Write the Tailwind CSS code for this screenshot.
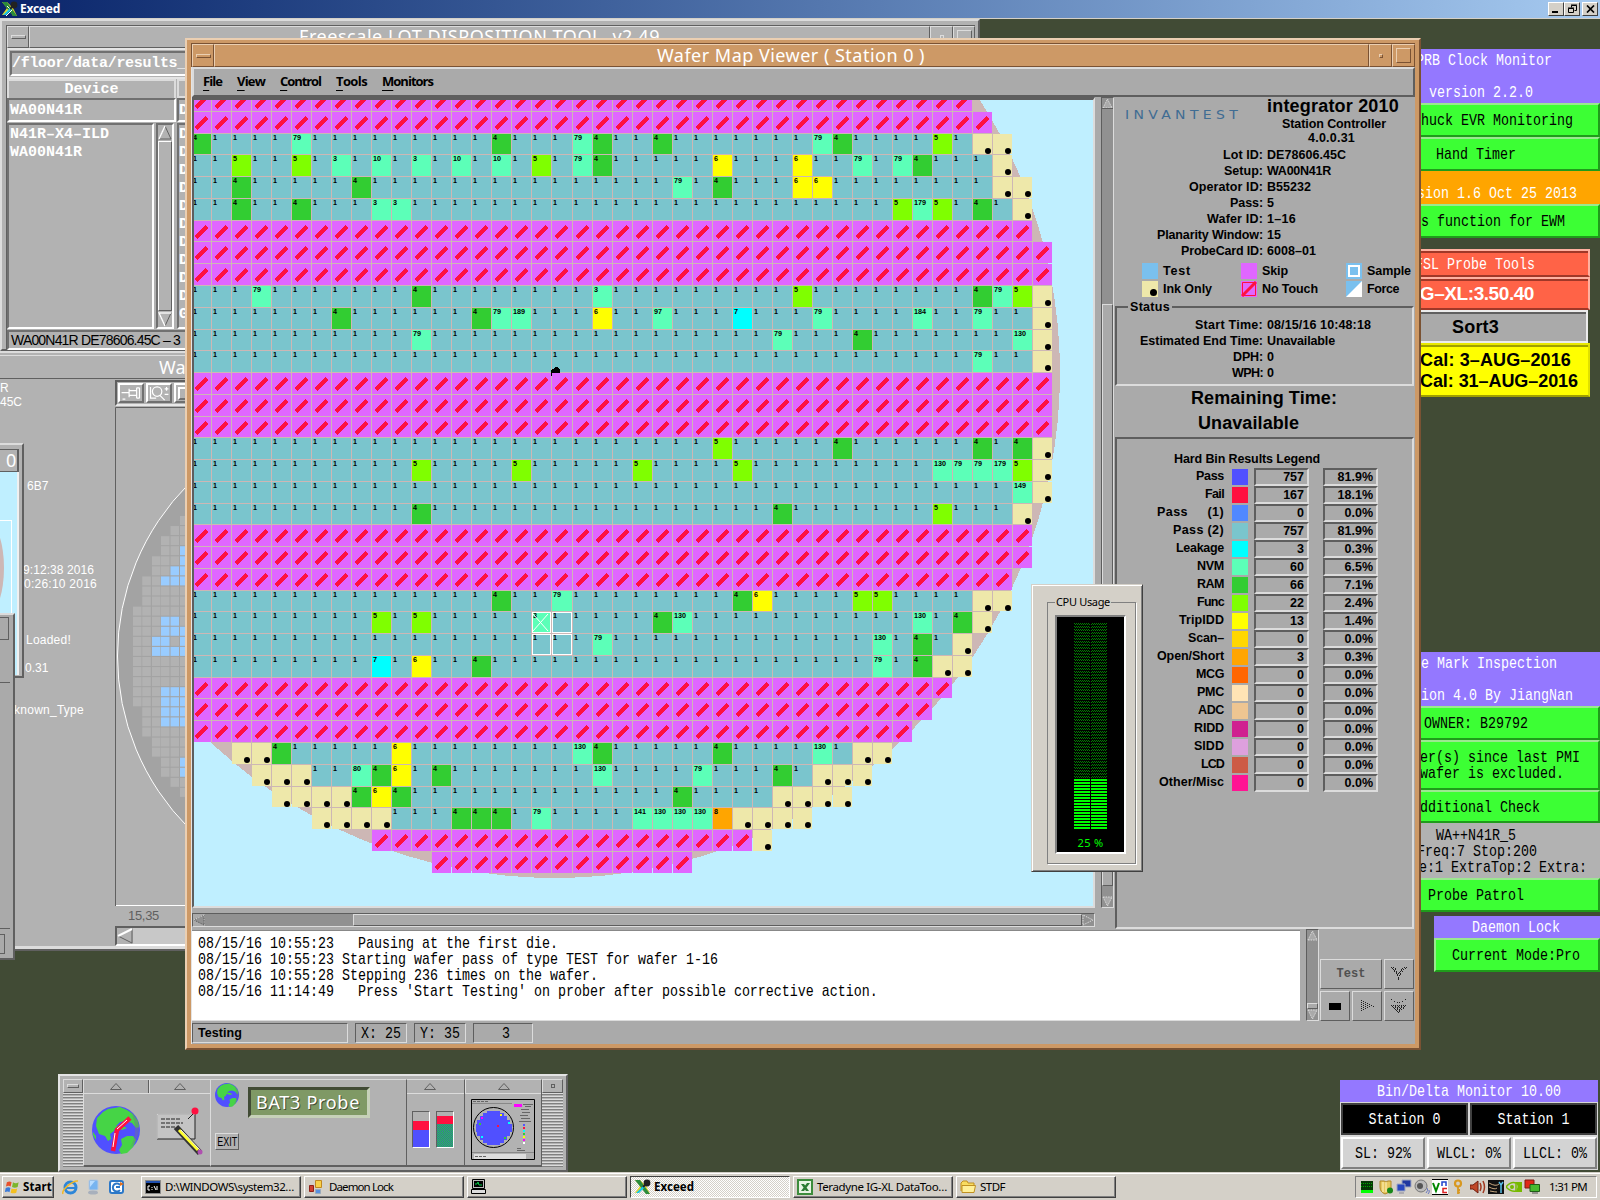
<!DOCTYPE html>
<html lang="en">
<head>
<meta charset="utf-8">
<title>Exceed</title>
<script src="https://cdn.jsdelivr.net/npm/@tailwindcss/browser@4"></script>
</head>
<body class="w-[1600px] h-[1200px] overflow-hidden bg-[#414b35] relative font-['Liberation_Sans',sans-serif] text-black">

<!-- Exceed title bar -->
<header class="h-[19px] flex items-center bg-linear-to-r from-[#0a246a] to-[#a6caf0] border-b border-[#d4d0c8] pl-[2px] pr-[2px]">
  <svg class="w-4 h-4 shrink-0" viewBox="0 0 16 16"><path d="M0 1l5 6-5 7h4l4-5 3 6h4l-4-8 3-4-5 2-4-4z" fill="#e8d820"/><path d="M0 1h5l10 14h-4z" fill="#2c8c3c"/><path d="M1 14L9 6l1 2-6 6z" fill="#19c8e8"/><path d="M4 15l6-6M5 5l3 3" stroke="#fff"/><circle cx="12" cy="4" r="3.4" fill="#222"/><path d="M8 8l3-3" stroke="#222" stroke-width="2"/></svg>
  <span data-w="40" class="ml-[2px] text-white font-bold text-[12px] leading-none font-['Noto_Sans',sans-serif]">Exceed</span>
  <div class="ml-auto flex h-[14px]">
    <div class="w-[16px] bg-[#d4d0c8] border border-t-white border-l-white border-r-[#404040] border-b-[#404040] flex items-end pl-[3px] pb-[2px]"><i class="w-[6px] h-[2px] bg-black"></i></div>
    <div class="w-[16px] bg-[#d4d0c8] border border-t-white border-l-white border-r-[#404040] border-b-[#404040] flex items-center justify-center"><svg class="w-[9px] h-[10px]" viewBox="0 0 9 10"><path d="M3.5 3.5V1.5H8.5V6.5H6.500M3 1h6M.5 4.500h5v4h-5zM0 4h6" fill="none" stroke="#000"/></svg></div>
    <div class="ml-[2px] w-[16px] bg-[#d4d0c8] border border-t-white border-l-white border-r-[#404040] border-b-[#404040] flex items-center justify-center"><svg class="w-[9px] h-[8px]" viewBox="0 0 9 8"><path d="M1 .5l7 7M8 .5l-7 7" stroke="#000" stroke-width="1.700"/></svg></div>
  </div>
</header>

<!-- PRB clock monitor -->
<aside class="absolute left-[1400px] top-[49px] w-[200px] font-['Liberation_Mono',monospace] text-[13.33px] leading-none [&_span]:inline-block [&_span]:scale-y-[1.2] [&_span]:translate-y-px [&_span]:whitespace-pre">
  <div class="h-[54px] bg-[#9478ff] text-white pt-[4px]">
    <div class="pl-4 h-8"><span>PRB Clock Monitor</span></div>
    <div class="pl-[29px]"><span>version 2.2.0</span></div>
  </div>
  <div class="h-[34px] bg-[#3cff34] border-2 border-t-[#9be890] border-r-[#1f9c1b] border-b-[#1f9c1b] border-l-[#3cff34] pl-[11px] flex items-center"><span>Chuck EVR Monitoring</span></div>
  <div class="h-[34px] bg-[#3cff34] border-2 border-t-[#9be890] border-r-[#1f9c1b] border-b-[#1f9c1b] border-l-[#3cff34] pl-[34px] flex items-center"><span>Hand Timer</span></div>
  <div class="h-[33px] bg-[#ffa500] text-white pl-[9px] flex items-end pb-[5px]"><span>rsion 1.6 Oct 25 2013</span></div>
  <div class="h-[34px] bg-[#3cff34] border-2 border-t-[#9be890] border-r-[#1f9c1b] border-b-[#1f9c1b] border-l-[#3cff34] pl-[19px] flex items-center"><span>s function for EWM</span></div>
</aside>

<!-- FSL probe tools -->
<aside class="absolute left-[1400px] top-[249px] w-[190px] leading-none">
  <div class="h-[28px] bg-[#ff6347] border-2 border-[#ffb0a0] border-b-[#a03828] pt-px shadow-[inset_0_2px_#a03828] flex items-center pl-[13px] font-['Liberation_Mono',monospace] text-[13.33px] text-white"><span class="inline-block scale-y-[1.2] translate-y-px">FSL Probe Tools</span></div>
  <div class="h-[33px] bg-[#ff6347] border-2 border-[#ffb0a0] border-b-[#a03828] shadow-[inset_0_2px_#a03828] flex items-center pl-[13px] text-[19px] font-bold text-white"><span data-w="119">IG–XL:3.50.40</span></div>
  <div class="h-[33px] w-[188px] bg-[#aaaaaa] border-2 border-[#ececec] shadow-[inset_0_2px_#606060] flex items-center pl-[50px] text-[18px] font-bold"><span data-w="47">Sort3</span></div>
  <div class="h-[54px] bg-[#ffff00] border-2 border-[#e0e000] border-t-[#e8e800] border-b-[#a0a000] shadow-[inset_0_2px_#a0a000] pl-[18px] pt-[5px] text-[18px] font-bold leading-[21px]">
    <div><span data-w="151">Cal: 3–AUG–2016</span></div><div><span data-w="158">Cal: 31–AUG–2016</span></div>
  </div>
</aside>

<!-- Probe mark inspection -->
<aside class="absolute left-[1400px] top-[652px] w-[200px] font-['Liberation_Mono',monospace] text-[13.33px] leading-none [&_span]:inline-block [&_span]:scale-y-[1.2] [&_span]:translate-y-px [&_span]:whitespace-pre">
  <div class="h-[54px] bg-[#9478ff] text-white pt-[4px]">
    <div class="pl-[21px] h-8"><span>e Mark Inspection</span></div>
    <div class="pl-[21px]"><span>ion 4.0 By JiangNan</span></div>
  </div>
  <div class="h-[34px] bg-[#3cff34] border-2 border-t-[#9be890] border-r-[#1f9c1b] border-b-[#1f9c1b] border-l-[#3cff34] pl-[22px] flex items-center"><span>OWNER: B29792</span></div>
  <div class="h-[50px] bg-[#3cff34] border-2 border-t-[#9be890] border-r-[#1f9c1b] border-b-[#1f9c1b] border-l-[#3cff34] pl-[18px] pt-[7px] leading-4"><div><span>er(s) since last PMI</span></div><div><span>wafer is excluded.</span></div></div>
  <div class="h-[33px] bg-[#3cff34] border-2 border-t-[#9be890] border-r-[#1f9c1b] border-b-[#1f9c1b] border-l-[#3cff34] pl-[18px] flex items-center"><span>dditional Check</span></div>
  <div class="h-[55px] bg-[#b2b2b2] pt-[4px] leading-4">
    <div class="pl-9"><span>WA++N41R_5</span></div><div class="pl-[17px]"><span>Freq:7 Stop:200</span></div><div class="pl-[19px]"><span>e:1 ExtraTop:2 Extra:</span></div>
  </div>
  <div class="h-[34px] bg-[#3cff34] border-2 border-t-[#9be890] border-r-[#1f9c1b] border-b-[#1f9c1b] border-l-[#3cff34] pl-[26px] flex items-center"><span>Probe Patrol</span></div>
</aside>

<!-- Daemon lock -->
<aside class="absolute left-[1434px] top-[916px] w-[166px] font-['Liberation_Mono',monospace] text-[13.33px] leading-none [&_span]:inline-block [&_span]:scale-y-[1.2] [&_span]:translate-y-px [&_span]:whitespace-pre">
  <div class="h-[22px] bg-[#9478ff] text-white pl-[38px] flex items-center"><span>Daemon Lock</span></div>
  <div class="h-[34px] bg-[#3cff34] border-2 border-t-[#9be890] border-r-[#1f9c1b] border-b-[#1f9c1b] border-l-[#9be890] pl-[16px] flex items-center"><span>Current Mode:Pro</span></div>
</aside>

<!-- Bin / delta monitor -->
<aside class="absolute left-[1340px] top-[1080px] w-[258px] bg-[#d8d8d8] font-['Liberation_Mono',monospace] text-[13.33px] leading-none [&_span]:inline-block [&_span]:scale-y-[1.2] [&_span]:translate-y-px [&_span]:whitespace-pre">
  <div class="h-[22px] bg-[#9478ff] text-white flex items-center justify-center"><span>Bin/Delta Monitor 10.00</span></div>
  <div class="flex gap-[2px] p-[1px] h-[34px] text-white">
    <div class="flex-1 bg-black border-2 border-[#404040] flex items-center justify-center"><span>Station 0</span></div>
    <div class="flex-1 bg-black border-2 border-[#404040] flex items-center justify-center"><span>Station 1</span></div>
  </div>
  <div class="flex gap-[2px] p-[1px] h-[34px]">
    <div class="flex-1 bg-[#d3d3d3] border-2 border-t-white border-l-white border-r-[#808080] border-b-[#808080] flex items-center justify-center"><span>SL: 92%</span></div>
    <div class="flex-1 bg-[#d3d3d3] border-2 border-t-white border-l-white border-r-[#808080] border-b-[#808080] flex items-center justify-center"><span>WLCL: 0%</span></div>
    <div class="flex-1 bg-[#d3d3d3] border-2 border-t-white border-l-white border-r-[#808080] border-b-[#808080] flex items-center justify-center"><span>LLCL: 0%</span></div>
  </div>
</aside>

<!-- Lot disposition tool -->
<section class="absolute left-0 top-[19px] w-[980px] h-[332px] bg-[#b2b2b2] border-2 border-t-[#dcdcdc] border-l-[#dcdcdc] border-r-[#606060] border-b-[#606060] pl-[4px] pr-[3px] pt-[4px] flex flex-col">
  <div class="h-[23px] shrink-0 border-t border-l border-[#606060] flex">
    <div class="w-[22px] border border-t-[#dcdcdc] border-l-[#dcdcdc] border-r-[#606060] border-b-[#606060] flex items-center justify-center"><i class="w-[15px] h-[4px] border border-t-[#dcdcdc] border-l-[#dcdcdc] border-r-[#606060] border-b-[#606060]"></i></div>
    <div class="flex-1 border border-t-[#dcdcdc] border-l-[#dcdcdc] border-r-[#606060] border-b-[#606060] text-white text-[18px] leading-[18px] pl-[269px] font-['Noto_Sans',sans-serif] overflow-hidden"><span data-w="361">Freescale LOT DISPOSITION TOOL  v2.49</span></div>
    <div class="w-[23px] border border-t-[#dcdcdc] border-l-[#dcdcdc] border-r-[#606060] flex items-center justify-center"><i class="w-[4px] h-[4px] border border-[#dcdcdc]"></i></div>
    <div class="w-[22px] border border-t-[#dcdcdc] border-l-[#dcdcdc] border-r-[#606060] flex items-center justify-center"><i class="w-[15px] h-[15px] border border-t-[#dcdcdc] border-l-[#dcdcdc] border-r-[#606060] border-b-[#606060]"></i></div>
  </div>
  <div class="w-[300px] border-l border-[#606060] font-['Liberation_Mono',monospace] font-bold text-[15px] leading-none text-white">
    <div class="h-[31px] border-t-2 border-l-2 border-b-2 border-[#e4e4e4] p-px"><div class="h-full border-t-2 border-l-2 border-[#707070] border-b-2 border-b-white flex items-center whitespace-nowrap"><span data-w="174">/floor/data/results_</span></div></div>
    <div class="flex">
      <div class="w-[169px]">
        <div class="h-[19px] border-2 border-b-0 border-[#dcdcdc] flex items-center justify-center">Device</div>
        <div class="h-[24px] border-2 border-t-[#707070] border-l-[#707070] border-r-white border-b-white flex items-center pl-px">WA00N41R</div>
        <div class="flex mt-[1px] h-[206px] gap-[2px]">
          <div class="w-[147px] border-2 border-t-[#707070] border-l-[#707070] border-r-white border-b-white pl-px leading-[18px] pt-px">N41R–X4–ILD<br>WA00N41R</div>
          <div class="w-[18px] border-2 border-t-[#707070] border-l-[#707070] border-r-white border-b-white flex flex-col">
            <svg class="w-[14px] h-[15px]" viewBox="0 0 14 15"><path d="M1 14L7 1l6 13z" fill="#b2b2b2" stroke="#606060"/><path d="M1 14L7 1" stroke="#fff" stroke-width="1.500"/></svg>
            <div class="flex-1 border border-t-white border-l-white border-r-[#606060] border-b-[#606060] my-px"></div>
            <svg class="w-[14px] h-[15px]" viewBox="0 0 14 15"><path d="M1 1L7 14l6-13z" fill="#b2b2b2" stroke="#606060"/><path d="M13 1H1l6 13" stroke="#fff" fill="none" stroke-width="1.500"/></svg>
          </div>
        </div>
      </div>
      <div class="flex-1 pl-px">
        <div class="h-[19px] border-2 border-[#dcdcdc]"></div>
        <div class="h-[24px] border-2 border-t-[#707070] border-l-[#707070] border-b-white flex items-center">D</div>
        <div class="mt-[1px] h-[206px] border-2 border-t-[#707070] border-l-[#707070] border-b-white leading-[18px] pt-px">D<br>D<br>D<br>D<br>D<br>D<br>D<br>D<br>D<br>D<br>G</div>
      </div>
    </div>
    <div class="h-[20px] mt-px border-2 border-t-[#707070] border-l-[#707070] border-b-white font-['Liberation_Sans',sans-serif] font-normal text-black text-[14px] flex items-center pl-[2px]"><span data-w="169">WA00N41R DE78606.45C – 3</span></div>
  </div>
</section>

<!-- Wafer overview window -->
<section class="absolute left-0 top-[351px] w-[300px] h-[600px] bg-[#b2b2b2] border-t-2 border-t-[#dcdcdc] border-b-[3px] border-b-[#606060] flex flex-col">
  <div class="h-[24px] shrink-0 mt-[2px] border-y border-t-[#dcdcdc] border-b-[#606060] pl-[159px] text-white text-[18px] leading-[22px] font-['Noto_Sans',sans-serif]">Wa</div>
  <div class="flex flex-1 border-b-[3px] border-[#dcdcdc] pt-px">
    <div class="w-[115px] shrink-0 text-[12px] leading-[14px] text-white">
      <div class="pt-px">R</div>
      <div>45C</div>
      <div class="pl-[27px] pt-[70px]">6B7</div>
      <div class="pl-[23px] pt-[70px]"><span data-w="71">9:12:38 2016</span></div>
      <div class="pl-[24px]"><span data-w="73">0:26:10 2016</span></div>
      <div class="pl-[26px] pt-[42px]"><span data-w="45">Loaded!</span></div>
      <div class="pl-[25px] pt-[14px]">0.31</div>
      <div class="pl-[14px] pt-[28px]"><span data-w="70">known_Type</span></div>
    </div>
    <div class="flex-1">
      <div class="h-[26px] border-2 border-[#e8e8e8] border-t-[#606060] border-l-[#606060] p-px flex gap-[2px]">
        <div class="w-[26px] shrink-0 border-2 border-t-white border-l-white border-r-[#707070] border-b-[#707070]"><svg viewBox="0 0 22 17" class="w-full h-full"><path d="M1 8h8M9 4v9M9 6h8M9 11h8M17 3v11M20 3v11M17 3h3M17 14h3M2 15h3" fill="none" stroke="#fff" stroke-width="1.300"/></svg></div>
        <div class="w-[26px] shrink-0 border-2 border-t-white border-l-white border-r-[#707070] border-b-[#707070]"><svg viewBox="0 0 22 17" class="w-full h-full"><circle cx="9" cy="7" r="5" fill="none" stroke="#fff" stroke-width="1.300"/><path d="M12 11l5 5M2 2v12h6M17 4h4M19 2v4M17 10h4" fill="none" stroke="#fff" stroke-width="1.300"/></svg></div>
        <div class="w-[26px] shrink-0 border-2 border-t-white border-l-white border-r-[#707070] border-b-[#707070] p-[2px]"><div class="w-[14px] h-[13px] border-2 border-r-[#707070] border-b-[#707070] border-white"></div></div>
      </div>
      <svg id="mini" class="block mt-px w-[185px] h-[499px]" viewBox="115 406 185 499">
        <path d="M115.500 905V406.500H300M115 904.500H300" stroke="#606060" fill="none"/>
        <path d="M116 904.500H300" stroke="#fff"/>
        <circle cx="361" cy="655" r="243.500" fill="#a3a3a3" stroke="#fff"/>
      </svg>
      <div class="h-[20px] pl-[13px] text-[13px] leading-[19px] text-[#606060]"><span data-w="31">15,35</span></div>
      <div class="h-[20px] border-2 border-t-[#606060] border-l-[#606060] border-white bg-[#b2b2b2] flex"><svg viewBox="0 0 16 16" class="w-4 h-4"><path d="M15 1v14L1 8z" fill="#b2b2b2" stroke="#606060"/><path d="M15 1L1 8" stroke="#fff" stroke-width="2"/></svg><div class="flex-1 bg-[#c8c8c8]"></div></div>
    </div>
  </div>
</section>

<!-- Overlapping window edges -->
<section class="absolute left-0 top-[443px] w-[24px] h-[235px] bg-[#b2b2b2] border-r-2 border-b-2 border-[#606060] border-t-2 border-t-[#dcdcdc] pt-[4px] pr-[3px]">
  <div class="h-[23px] border-t border-r-2 border-b border-[#606060] text-white text-[18px] leading-[20px] pl-[6px] font-['Noto_Sans',sans-serif]">0</div>
  <div class="h-[203px] bg-[#bfefff] border-r-2 border-[#f0f0f0] pt-[48px]">
    <div class="relative w-[12px] h-[150px] border-t border-r border-white flex items-center overflow-hidden"><i class="absolute -left-[30px] top-0 w-[34px] h-[94px] rounded-[50%] bg-[#cdb7b5]"></i></div>
  </div>
</section>
<section class="absolute left-0 top-[613px] w-[15px] h-[347px] bg-[#aaaaaa] border-r-2 border-b-2 border-[#606060] border-t-2 border-t-[#dcdcdc] pt-[2px] pr-[3px] flex flex-col">
  <div class="h-[23px] border border-l-0 border-[#606060] mr-px"></div>
  <div class="h-[43px] border-b border-[#606060]"></div>
  <div class="flex-1"></div>
  <div class="h-[30px] border-t border-[#606060] pt-[5px] pr-[5px] pb-[4px]"><div class="h-full border-y border-r border-[#606060]"></div></div>
</section>

<!-- Wafer map viewer -->
<section class="absolute left-[185px] top-[38px] w-[1236px] h-[1012px] bg-[#cd9966] border-2 border-t-[#ebcfb2] border-l-[#ebcfb2] border-r-[#7a5233] border-b-[#7a5233] pl-[4px] pr-[4px] pt-[3px] pb-[4px] flex flex-col">
  <div class="h-[24px] shrink-0 border-t border-l border-[#7a5233] flex">
    <div class="w-[22px] border border-t-[#ebcfb2] border-l-[#ebcfb2] border-r-[#7a5233] border-b-[#7a5233] flex items-center justify-center"><i class="w-[15px] h-[4px] border border-t-[#ebcfb2] border-l-[#ebcfb2] border-r-[#7a5233] border-b-[#7a5233]"></i></div>
    <div class="flex-1 border border-t-[#ebcfb2] border-l-[#ebcfb2] border-r-[#7a5233] border-b-[#7a5233] text-white text-[18px] leading-[20px] pl-[442px] font-['Noto_Sans',sans-serif]"><span data-w="268">Wafer Map Viewer ( Station 0 )</span></div>
    <div class="w-[23px] border border-t-[#ebcfb2] border-l-[#ebcfb2] border-r-[#7a5233] border-b-[#7a5233] flex items-center justify-center"><i class="w-[4px] h-[4px] border border-t-[#ebcfb2] border-l-[#ebcfb2] border-r-[#7a5233] border-b-[#7a5233]"></i></div>
    <div class="w-[23px] border border-t-[#ebcfb2] border-l-[#ebcfb2] border-r-[#7a5233] border-b-[#7a5233] flex items-center justify-center"><i class="w-[15px] h-[15px] border border-t-[#ebcfb2] border-l-[#ebcfb2] border-r-[#7a5233] border-b-[#7a5233]"></i></div>
  </div>
  <div class="flex-1 bg-[#aaaaaa] border-l border-[#e4e4e4] flex flex-col min-h-0">
    <nav class="h-[30px] shrink-0 border-2 border-t-[#dcdcdc] border-l-[#dcdcdc] border-r-[#5e5e5e] border-b-[#5e5e5e] flex items-center font-bold text-[13px] leading-none font-['Open_Sans','Noto_Sans',sans-serif] pl-[9px] pb-[2px]">
      <span class="w-[34px]"><span data-w="19"><u class="underline-offset-4">F</u>ile</span></span>
      <span class="w-[43px]"><span data-w="28"><u class="underline-offset-4">V</u>iew</span></span>
      <span class="w-[56px]"><span data-w="41"><u class="underline-offset-4">C</u>ontrol</span></span>
      <span class="w-[46px]"><span data-w="31"><u class="underline-offset-4">T</u>ools</span></span>
      <span data-w="51"><u class="underline-offset-4">M</u>onitors</span>
    </nav>
    <div class="flex h-[831px] shrink-0">
      <div class="w-[903px] shrink-0">
        <div class="h-[811px] border-t-[3px] border-l-2 border-b-2 border-r-2 border-t-[#5e5e5e] border-l-[#5e5e5e] border-r-[#dcdcdc] border-b-[#dcdcdc] overflow-hidden">
          <svg id="map" class="block w-[899px] h-[806px]" viewBox="194 100 899 806" shape-rendering="crispEdges"></svg>
        </div>
        <div class="mt-[5px] h-[14px] bg-[#919191] border border-t-[#5e5e5e] border-l-[#5e5e5e] border-r-[#dcdcdc] border-b-[#dcdcdc] flex">
          <svg viewBox="0 0 12 12" class="w-3 h-3 bg-[#aaa]"><path d="M11 1v10L1 6z" fill="#919191" stroke="#5e5e5e" stroke-dasharray="1.500 1"/><path d="M11 1L1 6" stroke="#dcdcdc" stroke-dasharray="1.500 1"/></svg>
          <div class="w-[148px]"></div>
          <div class="flex-1 bg-[#aaa] border border-t-[#dcdcdc] border-l-[#dcdcdc] border-r-[#5e5e5e] border-b-[#5e5e5e]"></div>
          <svg viewBox="0 0 12 12" class="w-3 h-3 bg-[#919191]"><path d="M1 1v10l10-5z" fill="#919191" stroke="#dcdcdc" stroke-dasharray="1.500 1"/></svg>
        </div>
      </div>
      <div class="ml-[6px] w-[13px] shrink-0 h-[811px] bg-[#919191] border border-t-[#5e5e5e] border-l-[#5e5e5e] border-r-[#dcdcdc] border-b-[#dcdcdc] flex flex-col">
        <svg viewBox="0 0 11 11" class="w-[11px] h-[11px]"><path d="M1 10L5.500 1 10 10z" fill="#aaa" stroke="#dcdcdc" stroke-dasharray="1.500 1"/><path d="M0 10.500h11" stroke="#5e5e5e"/></svg>
        <div class="h-[195px]"></div>
        <div class="flex-1 bg-[#aaa] border border-t-[#dcdcdc] border-l-[#dcdcdc] border-r-[#5e5e5e] border-b-[#5e5e5e]"></div>
        <div class="h-[10px]"></div>
        <svg viewBox="0 0 11 11" class="w-[11px] h-[11px]"><path d="M1 1l4.500 9L10 1z" fill="#aaa" stroke="#dcdcdc" stroke-dasharray="1.500 1"/></svg>
      </div>
      <!-- Station controller panel -->
      <div class="flex-1 min-w-0 pl-px pr-[1px] font-bold text-[12.500px] leading-4">
        <div class="flex h-[50px]">
          <div class="w-[140px] shrink-0 pl-[10px] pt-[9px]"><span data-w="117" class="text-[14px] font-normal text-[#3f6c93] scale-y-90 font-['DejaVu_Sans',sans-serif]">INVANTEST</span></div>
          <div class="pl-[12px] pt-[1px]">
            <div class="text-[18px] leading-[17px]"><span data-w="132">integrator 2010</span></div>
            <div class="pl-[15px] leading-[15px] pt-[2px]"><span data-w="104">Station Controller</span></div>
            <div class="pl-[41px] leading-[13px]"><span data-w="47">4.0.0.31</span></div>
          </div>
        </div>
        <div id="lot"></div>
        <div class="grid grid-cols-[99px_105px_1fr] pl-[27px] gap-y-[2px] mt-[4px] leading-4">
          <div class="flex gap-[5px]"><i class="w-4 h-4 bg-[#7ac0ee]"></i><span data-w="28">Test</span></div>
          <div class="flex gap-[5px]"><i class="w-4 h-4 bg-[#e066ff]"></i><span data-w="26">Skip</span></div>
          <div class="flex gap-[5px]"><i class="w-4 h-4 bg-[#7ac0ee] p-[2px]"><i class="block w-3 h-3 border-2 border-white"></i></i><span data-w="44">Sample</span></div>
          <div class="flex gap-[5px]"><i class="w-4 h-4 bg-[#eee8aa] pl-2 pt-2"><i class="block w-[7px] h-[7px] rounded-full bg-black"></i></i><span data-w="49">Ink Only</span></div>
          <div class="flex gap-[5px]"><svg class="w-4 h-4" viewBox="0 0 16 16"><path fill="#e066ff" d="M0 0h16v16H0z"/><path d="M1.500 1.500h13v13h-13z" fill="none" stroke="#ff1040"/><path d="M1 15L15 1" stroke="#ff1040" stroke-width="3"/></svg><span data-w="56">No Touch</span></div>
          <div class="flex gap-[5px]"><svg class="w-4 h-4" viewBox="0 0 16 16"><path fill="#7ac0ee" d="M0 0h16v16H0z"/><path fill="#fff" d="M16 0v16H0z"/></svg><span data-w="32">Force</span></div>
        </div>
        <fieldset class="mt-[2px] h-[87px] border-2 border-[#5e5e5e] border-r-[#dcdcdc] border-b-[#dcdcdc] pl-0"><legend class="ml-[11px] px-[2px] leading-4"><span data-w="40">Status</span></legend><div id="status" class="pt-[2px] -ml-[2px]"></div></fieldset>
        <div class="text-[18px] leading-[25px] h-[51px]">
          <div class="pl-[76px]"><span data-w="146">Remaining Time:</span></div>
          <div class="pl-[83px]"><span data-w="101">Unavailable</span></div>
        </div>
        <div class="h-[492px] border-2 border-t-[#5e5e5e] border-l-[#5e5e5e] border-r-[#dcdcdc] border-b-[#dcdcdc] pt-[12px]">
          <div class="pl-[57px] leading-[17px]"><span data-w="146">Hard Bin Results Legend</span></div>
          <div id="bins"></div>
        </div>
      </div>
    </div>
    <div class="flex h-[93px] shrink-0 pt-[1px]">
      <pre class="mt-px w-[1108px] shrink-0 h-[91px] bg-white border-b border-[#dcdcdc] border-t border-t-[#888] pl-[6px] pt-[5px] font-['Liberation_Mono',monospace] text-[13.33px] leading-4 [&_span]:block [&_span]:h-4 [&_span]:scale-y-[1.2]"><span>08/15/16 10:55:23   Pausing at the first die.</span><span>08/15/16 10:55:23 Starting wafer pass of type TEST for wafer 1-16</span><span>08/15/16 10:55:28 Stepping 236 times on the wafer.</span><span>08/15/16 11:14:49   Press 'Start Testing' on prober after possible corrective action.</span></pre>
      <div class="ml-[6px] w-[13px] bg-[#919191] border border-t-[#5e5e5e] border-l-[#5e5e5e] border-r-[#dcdcdc] border-b-[#dcdcdc] flex flex-col">
        <svg viewBox="0 0 11 11" class="w-[11px] h-[11px]"><path d="M1 10L5.500 1 10 10z" fill="#aaa" stroke="#dcdcdc" stroke-dasharray="1.500 1"/></svg>
        <div class="flex-1"></div>
        <div class="h-[6px] bg-[#aaa] border border-t-[#dcdcdc] border-l-[#dcdcdc] border-r-[#5e5e5e] border-b-[#5e5e5e]"></div>
        <svg viewBox="0 0 11 11" class="w-[11px] h-[11px]"><path d="M1 1l4.500 9L10 1z" fill="#aaa" stroke="#dcdcdc" stroke-dasharray="1.500 1"/></svg>
      </div>
      <div class="grid grid-cols-[30px_30px_30px] grid-rows-[30px_30px] gap-[2px] content-end pl-px text-[#505050]">
        <div class="col-span-2 border border-t-[#dcdcdc] border-l-[#dcdcdc] border-r-[#5e5e5e] border-b-[#5e5e5e] flex items-center justify-center font-['Liberation_Mono',monospace] font-bold text-[12px]">Test</div>
        <div class="border border-t-[#dcdcdc] border-l-[#dcdcdc] border-r-[#5e5e5e] border-b-[#5e5e5e] flex items-center justify-center"><svg class="w-4 h-4" viewBox="0 0 16 16" shape-rendering="crispEdges"><path d="M0 1.500h3M13 1.500h3M2 3.500h4M10 3.500h4M3 5.500h4M9 5.500h4M5 7.500h6M6 9.500h4M7 11.500h2M7 13.500h2" stroke="#222" stroke-dasharray="1 1"/><path d="M1 2.500h4M11 2.500h4M3 4.500h3M10 4.500h3M5 6.500h6M6 8.500h4M7 12.500h2" stroke="#222" stroke-dasharray="1 2"/></svg></div>
        <div class="border border-t-[#dcdcdc] border-l-[#dcdcdc] border-r-[#5e5e5e] border-b-[#5e5e5e] flex items-center justify-center"><i class="w-3 h-[7px] bg-black"></i></div>
        <div class="border border-t-[#dcdcdc] border-l-[#dcdcdc] border-r-[#5e5e5e] border-b-[#5e5e5e] flex items-center justify-center"><svg class="w-[14px] h-[14px]" viewBox="0 0 14 14"><path d="M1.500 1v12M3.500 2v10M5.500 3v8M7.500 4v6M9.500 5v4M11.500 6v2M13.500 7v1" stroke="#222" stroke-dasharray="1 1"/></svg></div>
        <div class="border border-t-[#dcdcdc] border-l-[#dcdcdc] border-r-[#5e5e5e] border-b-[#5e5e5e] flex items-center justify-center"><svg class="w-4 h-4" viewBox="0 0 16 16" shape-rendering="crispEdges"><path d="M0 1.500h2M14 1.500h2M3 3.500h2M11 3.500h2M6 4.500h4M0 7.500h16M2 9.500h12M4 11.500h8M6 13.500h4" stroke="#222" stroke-dasharray="1 1"/><path d="M1 8.500h14M3 10.500h10M5 12.500h6M7 14.500h2" stroke="#222" stroke-dasharray="1 2"/></svg></div>
      </div>
    </div>
    <footer class="flex items-start pt-[2px] gap-[7px] font-['Liberation_Mono',monospace] text-[13.33px] leading-none [&_span]:inline-block">
      <div class="w-[156px] h-[20px] border border-t-[#5e5e5e] border-l-[#5e5e5e] border-r-[#dcdcdc] border-b-[#dcdcdc] flex items-center pl-[5px] font-bold text-[12.500px] font-['Liberation_Sans',sans-serif]"><span data-w="44">Testing</span></div>
      <div class="w-[52px] h-[20px] border border-t-[#5e5e5e] border-l-[#5e5e5e] border-r-[#dcdcdc] border-b-[#dcdcdc] flex items-center pl-[5px] whitespace-pre"><span class="scale-y-[1.2] translate-y-px">X: 25</span></div>
      <div class="w-[52px] h-[20px] border border-t-[#5e5e5e] border-l-[#5e5e5e] border-r-[#dcdcdc] border-b-[#dcdcdc] flex items-center pl-[5px] whitespace-pre"><span class="scale-y-[1.2] translate-y-px">Y: 35</span></div>
      <div class="w-[60px] h-[20px] border border-t-[#5e5e5e] border-l-[#5e5e5e] border-r-[#dcdcdc] border-b-[#dcdcdc] flex items-center pl-[28px]"><span class="scale-y-[1.2] translate-y-px">3</span></div>
    </footer>
  </div>
</section>

<!-- CPU usage gadget -->
<section class="absolute left-[1031px] top-[584px] w-[112px] h-[288px] bg-[#d4d0c8] border border-t-[#d4d0c8] border-l-[#d4d0c8] border-r-[#404040] border-b-[#404040] shadow-[inset_1px_1px_#fff,inset_-1px_-1px_#808080] pl-[15px] pt-[10px] font-['Noto_Sans',sans-serif] text-[11px]">
  <fieldset class="w-[89px] h-[269px] border border-[#808080] shadow-[1px_1px_#fff] px-[7px]">
    <legend class="px-[1px] leading-[14px]"><span data-w="54">CPU Usage</span></legend>
    <div class="mt-[6px] w-[71px] h-[239px] bg-black border-2 border-t-[#808080] border-l-[#808080] border-white flex flex-col items-center pt-[6px]">
      <svg class="w-[33px] h-[207px] shrink-0" viewBox="0 0 33 207" shape-rendering="crispEdges">
        <defs>
          <pattern id="off" width="2" height="3" patternUnits="userSpaceOnUse"><path d="M0 0h1v1H0zM1 1h1v1H1z" fill="#008000"/></pattern>
          <pattern id="on" width="2" height="3" patternUnits="userSpaceOnUse"><path d="M0 0h2v2H0z" fill="#00ff00"/></pattern>
        </defs>
        <path d="M0 0h16v156H0zM17 0h16v156H17z" fill="url(#off)"/><path d="M0 156h16v51H0zM17 156h16v51H17z" fill="url(#on)"/>
      </svg>
      <div class="text-[#00ff00] leading-[14px] pt-[6px]"><span data-w="26">25 %</span></div>
    </div>
  </fieldset>
</section>

<!-- CDE front panel -->
<section class="absolute left-[58px] top-[1074px] w-[510px] h-[98px] bg-[#b2b2b2] border-2 border-t-[#e4e4e4] border-l-[#e4e4e4] border-r-[#606060] border-b-[#606060] p-[3px] flex">
  <div class="w-[20px] flex flex-col"><div class="h-[14px] border border-t-[#dcdcdc] border-l-[#dcdcdc] border-r-[#606060] border-b-[#606060] flex items-center justify-center"><i class="w-3 h-[4px] border border-t-[#dcdcdc] border-l-[#dcdcdc] border-r-[#606060] border-b-[#606060]"></i></div><div class="flex-1 bg-[repeating-linear-gradient(#dcdcdc_0_1px,#808080_1px_2px,#b2b2b2_2px_3px)]"></div></div>
  <div class="w-[127px] border-l border-t border-[#dcdcdc] border-b-2 border-b-[#606060]">
    <div class="flex h-[14px] border-b border-[#dcdcdc]">
      <div class="w-[65px] border-r border-[#606060] flex justify-center items-center"><svg class="w-3 h-[7px]" viewBox="0 0 12 7"><path d="M.5 6.500L6 .5l5.500 6z" fill="#b2b2b2" stroke="#606060"/></svg></div>
      <div class="flex-1 border-l border-[#dcdcdc] flex justify-center items-center"><svg class="w-3 h-[7px]" viewBox="0 0 12 7"><path d="M.5 6.500L6 .5l5.500 6z" fill="#b2b2b2" stroke="#606060"/></svg></div>
    </div>
    <div class="flex h-[70px]">
      <svg class="w-[64px] h-[70px]" viewBox="0 0 64 70"><circle cx="32" cy="36" r="24" fill="#5050ff"/><path d="M13 24l6-6 5-3 12-2 7 3 6 4 5 7 1 6-3 1-4-5-6-2-6 1-4 4-2 5-4 3 1 5-3 2-3-5-6-2-3-8zM37 45l6-3 6 0 3 4-3 7-6 6-6 1-2-4 3-5zM30 33l6-2 7 3-5 2zM9 38l3 4 0 4-3-5z" fill="#46d446"/><path d="M47 18q9 8 8 18t-9 18q5-8 5-18t-4-18z" fill="#707090" opacity=".45"/><path d="M29 57l4-21 13-12" fill="none" stroke="#ff1040" stroke-width="4.500"/><path d="M29 53l2-14 M33 35l10-9" fill="none" stroke="#fff" stroke-width="1"/></svg>
      <svg class="w-[62px] h-[70px]" viewBox="0 0 62 70"><path d="M9 20h38v25H9z" fill="#c4c4c4" stroke="#222"/><path d="M9 45V20h38" fill="none" stroke="#fff"/><path d="M13 25h20M13 29h22M13 33h14" stroke="#222" stroke-dasharray="4 1"/><path d="M40 25l7-7" stroke="#222"/><circle cx="47" cy="17" r="3.500" fill="#ff1040"/><path d="M28 33l24 26" stroke="#333" stroke-width="6"/><path d="M31 36l19 20" stroke="#ffff30" stroke-width="3"/><path d="M33 36l19 20" stroke="#eee"/><circle cx="52" cy="58" r="2.500" fill="#b050b0"/></svg>
    </div>
  </div>
  <div class="w-[196px] border-l border-t border-[#dcdcdc] border-b-2 border-b-[#606060] flex pt-[3px] pl-[4px]">
    <div class="w-[24px]">
      <svg class="w-6 h-6" viewBox="8 12 48 48"><circle cx="32" cy="36" r="24" fill="#5050ff"/><path d="M13 24l6-6 5-3 12-2 7 3 6 4 5 7 1 6-3 1-4-5-6-2-6 1-4 4-2 5-4 3 1 5-3 2-3-5-6-2-3-8zM37 45l6-3 6 0 3 4-3 7-6 6-6 1-2-4 3-5zM30 33l6-2 7 3-5 2z" fill="#46d446"/><path d="M47 18q9 8 8 18t-9 18q5-8 5-18t-4-18z" fill="#707090" opacity=".45"/></svg>
      <div class="mt-[26px] w-6 h-[17px] border border-[#606060] border-t-[#dcdcdc] border-l-[#dcdcdc] flex items-center justify-center text-[12px] leading-none"><span class="inline-block scale-x-75">EXIT</span></div>
    </div>
    <div class="ml-[9px] mt-[4px] w-[122px] h-[31px] bg-[#7f9965] border-[3px] border-t-[#414b35] border-l-[#414b35] border-r-[#c6d1b9] border-b-[#c6d1b9] text-white text-[18px] leading-[24px] pl-[5px] font-['Noto_Sans',sans-serif] [text-shadow:1px_1px_#414b35]"><span data-w="104">BAT3 Probe</span></div>
  </div>
  <div class="w-[58px] border-l border-t border-l-[#606060] border-t-[#dcdcdc] border-b-2 border-b-[#606060]">
    <div class="h-[14px] border-b border-[#dcdcdc] flex pl-[17px] items-center"><svg class="w-3 h-[7px]" viewBox="0 0 12 7"><path d="M.5 6.500L6 .5l5.500 6z" fill="#b2b2b2" stroke="#606060"/></svg></div>
    <div class="flex gap-[6px] pl-[5px] pt-[17px]">
      <div class="w-[18px] h-[37px] border border-t-[#606060] border-l-[#606060] border-white pt-[9px]"><div class="h-[9px] bg-[#ff1040]"></div><div class="h-[17px] bg-[#5050ff]"></div></div>
      <div class="w-[18px] h-[37px] border border-t-[#606060] border-l-[#606060] border-white pt-[4px]"><div class="h-[8px] bg-[#ff1040]"></div><div class="h-[23px] bg-[repeating-conic-gradient(#20c050_0_25%,#4070a0_0_50%)] bg-size-[2px_2px]"></div></div>
    </div>
  </div>
  <div class="w-[78px] border-x border-t border-l-[#606060] border-r-[#606060] border-t-[#dcdcdc] border-b-2 border-b-[#606060]">
    <div class="h-[14px] border-b border-l border-[#dcdcdc] flex justify-center items-center"><svg class="w-3 h-[7px]" viewBox="0 0 12 7"><path d="M.5 6.500L6 .5l5.500 6z" fill="#b2b2b2" stroke="#606060"/></svg></div>
    <svg class="ml-[6px] mt-[5px] w-[65px] h-[62px]" viewBox="0 0 65 62"><path d="M.5.5h63v60H.5z" fill="#b2b2b2" stroke="#000"/><path d="M2 2.500h15" stroke="#666" stroke-dasharray="3 1"/><path d="M1 4.500h40M1 53.500h62" stroke="#888"/><circle cx="22.500" cy="28.500" r="20" fill="#b2b2b2" stroke="#000"/><path d="M16 12h13v2h4v3h3v4h3v4h2v8h-2v4h-3v4h-3v3h-4v2H16v-2h-4v-3H9v-4H6v-4H5v-8h1v-4h3v-4h3v-3h4z" fill="#5050ff"/><path d="M10 18h2v2h-2z" fill="#f0f"/><path d="M29 15h2v2h-2z" fill="#ff0"/><path d="M37 23h2v2h-2zM10 37h2v2h-2z" fill="#0ff"/><path d="M26 26h2v2h-2z" fill="#ff1040"/><path d="M8 24h2v2H8zM33 38h2v2h-2z" fill="#3c3"/><path d="M43 5h8v3h-8z" fill="#f0f"/><path d="M52 5.500h10M54 7.500h6M50 10.500h8M51 13.500h8M49 16.500h8M50 19.500h9M48 22.500h12M46 49.500h4M46 51.500h8" stroke="#666"/><path d="M52 25h2v2h-2z" fill="#55f"/><path d="M52 28h2v2h-2z" fill="#f14"/><path d="M52 31h2v2h-2z" fill="#0ff"/><path d="M52 34h2v2h-2z" fill="#3c3"/><path d="M52 37h2v2h-2z" fill="#ff0"/><path d="M52 40h2v2h-2z" fill="#f0f"/><path d="M52 43h2v2h-2z" fill="#fff"/><path d="M3 55h52v5H3z" fill="#ddd"/><path d="M4 57.500h11" stroke="#666" stroke-dasharray="3 1"/></svg>
  </div>
  <div class="w-[21px] flex flex-col"><div class="h-[14px] border border-t-[#dcdcdc] border-l-[#dcdcdc] border-r-[#606060] border-b-[#606060] flex items-center justify-center"><i class="w-[4px] h-[4px] border border-[#606060]"></i></div><div class="flex-1 bg-[repeating-linear-gradient(#dcdcdc_0_1px,#808080_1px_2px,#b2b2b2_2px_3px)]"></div></div>
</section>

<!-- Windows taskbar -->
<footer class="absolute left-0 bottom-0 w-full h-[28px] bg-[#d4d0c8] border-t border-[#d4d0c8] shadow-[inset_0_1px_#fff] flex items-center pt-px pl-[2px] pr-[3px] font-['Noto_Sans',sans-serif] text-[11.500px] leading-none [&_span]:whitespace-pre">
  <div class="w-[52px] h-[22px] border border-t-white border-l-white border-r-[#404040] border-b-[#404040] shadow-[inset_-1px_-1px_#808080] flex items-center gap-[3px] pl-[2px] font-bold">
    <svg class="w-[15px] h-[14px]" viewBox="0 0 16 14"><path d="M2 2q3-2 5 0L6 6.500Q4 5 1 6.500z" fill="#e8502a"/><path d="M8.500 2q3 2 6 0L13.500 7q-3 1.500-6 0z" fill="#7cb52c"/><path d="M.8 8q3-1.500 5 0l-1 4.500Q3 11-.2 12.500z" fill="#3a7ad8"/><path d="M7 8.500q3 1.500 6 0L12 13q-3 1.500-6 0z" fill="#f4c020"/></svg><span data-w="29">Start</span>
  </div>
  <div class="flex gap-[6px] ml-[8px]">
    <svg class="w-[17px] h-4" viewBox="0 0 17 16"><circle cx="8.500" cy="8.500" r="5.500" fill="none" stroke="#2e86d8" stroke-width="3"/><path d="M4 9h10" stroke="#2e86d8" stroke-width="2"/><path d="M1 15C-1 11 11 1 16 2" fill="none" stroke="#f0b828" stroke-width="1.500"/></svg>
    <svg class="w-[16px] h-4" viewBox="0 0 16 16"><rect x="4" y="1" width="9" height="10" rx="1" fill="#78b4f0" stroke="#b8c8dc"/><path d="M5 2l5 0-5 6z" fill="#b8dcff"/><ellipse cx="8" cy="13.500" rx="5" ry="2" fill="#a8b0bc"/></svg>
    <svg class="w-[16px] h-4 ml-[2px]" viewBox="0 0 16 16"><rect x="1" y="2" width="13" height="12" rx="2" fill="#fff" stroke="#2c78c8" stroke-width="2"/><path d="M11 6a4 4 0 1 0 0 5M7 8h4" fill="none" stroke="#2c78c8" stroke-width="2"/><path d="M11 3l4 2-4 2z" fill="#e07020"/></svg>
  </div>
  <div class="flex gap-[3px] ml-[16px]">
    <div class="w-[160px] h-[22px] border border-t-white border-l-white border-r-[#404040] border-b-[#404040] shadow-[inset_-1px_-1px_#808080] flex items-center gap-1 pl-[3px]"><svg class="w-4 h-[14px]" viewBox="0 0 16 14"><path d="M.5.5h15v13H.5z" fill="#000" stroke="#8a8a8a"/><path d="M1 1h14v2H1z" fill="#2050b0"/><path d="M5 6H3v4h2M7 7v1M7 9v1M9 6l2 4M12 6v4" stroke="#fff" fill="none"/></svg><span data-w="129">D:\WINDOWS\system32…</span></div>
    <div class="w-[160px] h-[22px] border border-t-white border-l-white border-r-[#404040] border-b-[#404040] shadow-[inset_-1px_-1px_#808080] flex items-center gap-[6px] pl-1"><svg class="w-[14px] h-[14px]" viewBox="0 0 14 14"><path d="M.5 5.500h4v6h-4z" fill="#d04030" stroke="#902018"/><path d="M6.500.5h6v7h-6z" fill="#f8d048" stroke="#c08820"/><path d="M6.500 9.500h5v4h-5z" fill="#5890e0" stroke="#9ab"/></svg><span data-w="64">Daemon Lock</span></div>
    <div class="w-[160px] h-[22px] border border-t-white border-l-white border-r-[#404040] border-b-[#404040] shadow-[inset_-1px_-1px_#808080] flex items-center pl-[3px]"><svg class="w-4 h-4" viewBox="0 0 16 16"><path d="M1.500.5h12v9h-12z" fill="#bbb" stroke="#000"/><path d="M3 2h9v6H3z" fill="#000"/><path d="M4 5h2l1-2 1 3h3" fill="none" stroke="#0c4"/><path d="M.5 10.500h14v4H.5z" fill="#ddd" stroke="#000"/></svg></div>
    <div class="w-[160px] h-[22px] border border-t-[#404040] border-l-[#404040] border-r-white border-b-white bg-[repeating-conic-gradient(#fff_0_25%,#d4d0c8_0_50%)] bg-size-[2px_2px] flex items-center gap-[3px] pl-[4px] font-bold"><svg class="w-4 h-4" viewBox="0 0 16 16"><path d="M0 1l5 6-5 7h4l4-5 3 6h4l-4-8 3-4-5 2-4-4z" fill="#e8d820"/><path d="M0 1h5l10 14h-4z" fill="#2c8c3c"/><path d="M1 14L9 6l1 2-6 6z" fill="#19c8e8"/><circle cx="12" cy="4" r="3.400" fill="#222"/><path d="M8 8l3-3" stroke="#222" stroke-width="2"/></svg><span data-w="40">Exceed</span></div>
    <div class="w-[160px] h-[22px] border border-t-white border-l-white border-r-[#404040] border-b-[#404040] shadow-[inset_-1px_-1px_#808080] flex items-center gap-1 pl-[3px]"><svg class="w-4 h-4" viewBox="0 0 16 16"><path d="M1 1h14v14H1z" fill="#e8f4e4" stroke="#3c8c3c" stroke-width="2"/><path d="M4 5h3l5 7H9zM10 4h3l-6 8H4z" fill="#2c7c34"/></svg><span data-w="130">Teradyne IG-XL DataToo…</span></div>
    <div class="w-[160px] h-[22px] border border-t-white border-l-white border-r-[#404040] border-b-[#404040] shadow-[inset_-1px_-1px_#808080] flex items-center gap-1 pl-[3px]"><svg class="w-4 h-[14px]" viewBox="0 0 16 14"><path d="M1 11V3l2-2h4l1 2h6v3" fill="#f8dc60" stroke="#c09020"/><path d="M2 5.500h13.500L14 12.500H2z" fill="#fff098" stroke="#c09020"/></svg><span data-w="25">STDF</span></div>
  </div>
  <div class="ml-auto w-[242px] h-[22px] border border-t-[#808080] border-l-[#808080] border-white flex items-center pl-1">
    <div class="flex gap-[2px]">
      <svg class="w-[14px] h-4" viewBox="0 0 14 16"><path d="M1 2h12v12H1z" fill="#063806"/><path d="M1 11h12v3H1z" fill="#0f0"/><path d="M1 4.500h12M1 7.500h12" stroke="#0a0" stroke-dasharray="1 1"/></svg>
      <svg class="w-4 h-4 ml-[2px]" viewBox="0 0 16 16"><path d="M2 2h4l2 1 2-1h3v8q-1 4-6 5-5-2-5-7z" fill="#e8c860" stroke="#b08828"/><path d="M5 3v10M8 3v10" stroke="#fff4c0"/><circle cx="12" cy="11.500" r="3" fill="#188818"/></svg>
      <svg class="w-4 h-4" viewBox="0 0 16 16"><path d="M6 1h9v7H6z" fill="#2038a0" stroke="#a0a8c0"/><path d="M1 5h8v7H1z" fill="#2848c0" stroke="#a0a8c0"/><path d="M3 14h5" stroke="#889"/></svg>
      <svg class="w-4 h-4" viewBox="0 0 16 16"><circle cx="7" cy="7" r="6" fill="#bbb" stroke="#777"/><circle cx="6" cy="7" r="3" fill="#555"/><path d="M13 9q2 2-1 5M15 11q1 2-1 4" fill="none" stroke="#6878c0"/></svg>
      <svg class="w-4 h-4" viewBox="0 0 16 16"><path d="M0 0h16v16H0z" fill="#fff"/><path d="M0 .5h16M0 15.500h16" stroke="#000"/><path d="M1 4l3 8 3-8" fill="none" stroke="#080" stroke-width="2"/><path d="M10 7V3h4v4" fill="none" stroke="#24c" stroke-width="1.500"/><path d="M15 9.500h-4v4h4" fill="none" stroke="#d22" stroke-width="1.500"/></svg>
      <svg class="w-4 h-4" viewBox="0 0 16 16"><circle cx="8" cy="4.500" r="3" fill="none" stroke="#d89820" stroke-width="2.200"/><path d="M8 8v7M8 11h2M8 13.500h2" stroke="#d89820" stroke-width="1.800"/></svg>
      <svg class="w-4 h-4 ml-[2px]" viewBox="0 0 16 16"><path d="M0 6h3l5-4v12L3 10H0z" fill="#c04828" stroke="#702010"/><path d="M10 4q2 4 0 8M13 2q3 6 0 12" fill="none" stroke="#a03820" stroke-width="1.500"/></svg>
      <svg class="w-4 h-4" viewBox="0 0 16 16"><path d="M0 1h16v14H0z" fill="#111"/><path d="M1 4q7 4 10 1M1 8q6 3 8 1M2 12q5 1 7 1" fill="none" stroke="#c8a880"/><path d="M11 3l2 3 2-3M13 6v8" stroke="#58c0e8" fill="none" stroke-width="1.500"/></svg>
      <svg class="w-4 h-4" viewBox="0 0 16 16"><path d="M0 8q5-6 10-4v8Q5 13 0 8z" fill="none" stroke="#76b900" stroke-width="1.500"/><circle cx="6" cy="8" r="2" fill="#76b900"/><path d="M9 3h7v10H9q5-5 0-10z" fill="#76b900"/></svg>
      <svg class="w-4 h-4" viewBox="0 0 16 16"><path d="M1 1h9v8H1z" fill="#e02818" stroke="#801810"/><path d="M6 5.500h9.500v7H6z" fill="#48b830" stroke="#205c18"/><path d="M8 14h6" stroke="#555"/></svg>
    </div>
    <span data-w="38" class="ml-[9px]">1:31 PM</span>
  </div>
</footer>

<script>
const NS = 'http://www.w3.org/2000/svg';
const add = (parent, tag, attrs, text) => {
  const e = document.createElementNS(NS, tag);
  for (const k in attrs) e.setAttribute(k, attrs[k]);
  if (text) e.textContent = text;
  parent.appendChild(e);
  return e;
};

/* Wafer map: column and row origins on the pixel grid */
const map = document.getElementById('map');
const colX = c => c < 19 ? 191 + 20 * c : 572 + 20 * (c - 19);
const rowY = [90,111,133,154,176,198,220,241,263,285,307,329,350,372,394,416,437,459,481,503,524,546,568,590,611,633,655,677,698,720,742,764,786,807,829,851,873];
const binColor = {1:'#7ac5cd',4:'#32cd32',5:'#7fff00',6:'#ffff00',7:'#00ffff',8:'#ffa500'};
/* row: [kind, first, last, bins by column, inked columns] */
const S = (b, a = 0) => ['S', a, b, {}, []];
const T = (a, b, bins, ink) => ['T', a, b, bins, ink];
const rows = [
  S(38), S(39),
  T(0,38,{0:4,5:79,15:4,19:79,20:4,23:4,31:79,32:4,37:5},[39,40]),
  T(0,39,{2:5,5:5,7:3,9:10,11:3,13:10,15:10,17:5,19:79,20:4,26:6,30:6,33:79,35:79,36:4},[40]),
  T(0,39,{2:4,8:4,24:79,26:4,30:6,31:6},[40,41]),
  T(0,40,{2:4,5:4,9:3,10:3,35:5,36:179,37:5,39:4},[41]),
  S(41), S(42), S(42),
  T(0,41,{3:79,11:4,20:3,30:5,39:4,40:79,41:5},[42]),
  T(0,41,{7:4,14:4,15:79,16:189,20:6,23:97,27:7,31:79,36:184,39:79},[42]),
  T(0,41,{11:79,29:79,33:4,41:130},[42]),
  T(0,41,{39:79},[42]),
  S(42), S(42), S(42),
  T(0,41,{26:5,32:4,39:4,41:4},[42]),
  T(0,41,{11:5,16:5,22:5,27:5,37:130,38:79,39:79,40:179,41:5},[42]),
  T(0,41,{41:149},[42]),
  T(0,40,{11:4,29:4,37:5},[41]),
  S(41), S(41), S(40),
  T(0,38,{15:4,18:79,27:4,28:6,33:5,34:5},[39,40]),
  T(0,38,{9:5,11:5,17:3,23:4,24:130,36:130,38:4},[39]),
  T(0,37,{20:79,34:130,36:4},[38]),
  T(0,36,{9:7,11:6,14:4,34:79,36:4},[37,38]),
  S(37), S(36), S(35),
  T(4,32,{4:4,10:6,19:130,20:4,26:4,31:130},[2,3,33,34]),
  T(6,30,{8:80,9:4,10:6,12:4,20:130,25:79,29:4},[3,4,5,31,32,33]),
  T(8,28,{8:4,9:6,10:4,24:4},[4,5,6,7,29,30,31,32]),
  T(10,26,{13:4,14:4,15:4,17:79,22:141,23:130,24:130,25:130,26:8},[6,7,8,9,27,28,29,30]),
  ['S',9,27,{},[28]], S(24,12)
];
add(map, 'rect', {x:190, y:95, width:920, height:820, fill:'#bfefff'});
add(map, 'circle', {cx:555, cy:373, r:505, fill:'#cdb7b5'});
const cell = (c, r, fill) => add(map, 'rect', {x:colX(c)+1, y:rowY[r]+1, width:colX(c+1)-colX(c)-1, height:rowY[r+1]-rowY[r]-1, fill});
rows.forEach(([kind, a, b, bins, ink], r) => {
  for (let c = a; c <= b; c++) {
    const x = colX(c), y = rowY[r];
    if (kind === 'S') {
      cell(c, r, '#e066ff');
      add(map, 'path', {d:`M${x+5} ${y+17.5}L${x+16} ${y+6.5}`, stroke:'#ff1040', 'stroke-width':3.6});
    } else {
      const n = bins[c] || 1;
      cell(c, r, binColor[n] || '#5cffb8');
      add(map, 'text', {x:x+2, y:y+7, 'font-size':7.2, 'font-weight':700, 'font-family':'Liberation Sans, sans-serif'}, String(n));
    }
  }
  ink.forEach(c => {
    cell(c, r, '#eee8aa');
    add(map, 'circle', {cx:colX(c)+16, cy:rowY[r]+18, r:3, 'shape-rendering':'auto'});
  });
});
/* Probe site markers and the pointer */
[[17,24],[18,24],[17,25],[18,25]].forEach(([c, r]) => add(map, 'rect', {x:colX(c)+1.5, y:rowY[r]+1.5, width:colX(c+1)-colX(c)-2, height:rowY[r+1]-rowY[r]-2, fill:'none', stroke:'#fff'}));
add(map, 'path', {d:'M533 614l15 17M548 614l-15 17', stroke:'#fff', 'shape-rendering':'auto'});
add(map, 'path', {d:'M551 376v-4l1-3h2l1-2h2l3 3v3h-8v3z'});

/* Overview wafer */
const mini = document.getElementById('mini');
const mx = [133,142.3,152,161,170.5,180];
[[5],[4],[3],[3,5],[2,5],[2,4,5],[1,3,4,5],[1],[1],[0],[0,3,4],[0,3,4,5],[0,2,3,5],[0,2,3,4,5],[0],[0],[0],[0,3,4,5],[0,3,4,5],[1,3,4,5],[1,3,4,5],[1],[2],[2],[3,5],[3,5],[4],[5]].forEach(([first, ...blue], i) => {
  for (let c = first; c < 6; c++) add(mini, 'rect', {x:mx[c], y:515+i*10.07, width:8.5, height:9, fill:blue.includes(c) ? '#99ccff' : '#b2b2b2'});
});

/* Lot details, status and hard bin table */
const pair = (label, value, w1, w2) => `<div class="flex h-4"><div class="w-[148px] text-right whitespace-pre"><span data-w="${w1}">${label}</span></div><div class="pl-[4px] whitespace-pre"><span data-w="${w2}">${value}</span></div></div>`;
document.getElementById('lot').innerHTML =
  pair('Lot ID:','DE78606.45C',40,79) + pair('Setup:','WA00N41R',39,64) + pair('Operator ID:','B55232',74,44) +
  pair('Pass:','5',33,7) + pair('Wafer ID:','1–16',56,29) + pair('Planarity Window:','15',106,14) + pair('ProbeCard ID:','6008–01',82,49);
document.getElementById('status').innerHTML =
  pair('Start Time:','08/15/16 10:48:18',68,104) + pair('Estimated End Time:','Unavailable',123,68) + pair('DPH:','0',30,7) + pair('WPH:','0',31,7);
document.getElementById('bins').innerHTML = [
  ['Pass','#5050ff',757,'81.9%',28],['Fail','#ff1040',167,'18.1%',19],['Pass     (1)','#5088ff',0,'0.0%',67],['Pass (2)','#7ac5cd',757,'81.9%',51],
  ['Leakage','#00ffff',3,'0.3%',48],['NVM','#5cffb8',60,'6.5%',27],['RAM','#32cd32',66,'7.1%',27],['Func','#7fff00',22,'2.4%',27],
  ['TripIDD','#ffff00',13,'1.4%',45],['Scan–','#ffd700',0,'0.0%',36],['Open/Short','#ffa500',3,'0.3%',67],['MCG','#ff6600',0,'0.0%',28],
  ['PMC','#ffe4b5',0,'0.0%',27],['ADC','#eec591',0,'0.0%',26],['RIDD','#d02090',0,'0.0%',30],['SIDD','#dda0dd',0,'0.0%',30],
  ['LCD','#cd5b45',0,'0.0%',23],['Other/Misc','#ff1493',0,'0.0%',65]
].map(([name, color, n, pct, w]) => `<div class="flex h-[18px] leading-[16px]"><div class="w-[107px] text-right whitespace-pre"><span data-w="${w}">${name}</span></div><i class="ml-[8px] mt-px w-4 h-4" style="background:${color}"></i><div class="ml-[6px] w-[55px] h-[18px] border-2 border-t-[#5e5e5e] border-l-[#5e5e5e] border-r-[#dcdcdc] border-b-[#dcdcdc] leading-[14px] pr-[3px] text-right text-[12.500px]">${n}</div><div class="ml-[14px] w-[55px] h-[18px] border-2 border-t-[#5e5e5e] border-l-[#5e5e5e] border-r-[#dcdcdc] border-b-[#dcdcdc] leading-[14px] pr-[3px] text-right text-[12.500px]">${pct}</div></div>`).join('');

/* Track each label so that it spans its nominal width */
const labels = [...document.querySelectorAll('[data-w]')];
labels.forEach(e => { e.style.display = 'inline-block'; e.style.whiteSpace = 'pre'; e.style.flex = 'none'; });
const fit = () => {
  labels.forEach(e => { e.style.letterSpacing = '0px'; });
  const widths = labels.map(e => e.getBoundingClientRect().width);
  labels.forEach((e, i) => { e.style.letterSpacing = ((e.dataset.w - widths[i]) / e.textContent.length).toFixed(3) + 'px'; });
};
fit();
window.addEventListener('load', () => { fit(); requestAnimationFrame(fit); });
new ResizeObserver(fit).observe(document.querySelector('header'));
document.fonts.ready.then(fit);
</script>
</body>
</html>
